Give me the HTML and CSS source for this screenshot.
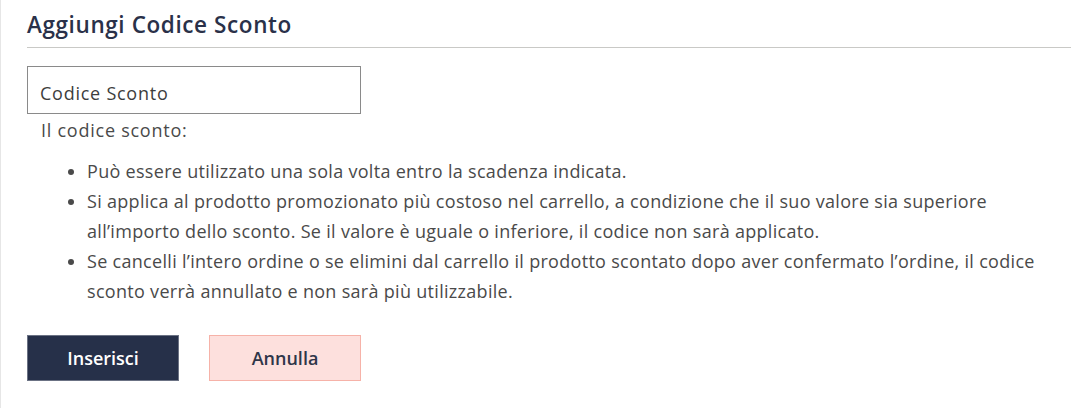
FILE: index.html
```html
<!DOCTYPE html>
<html lang="it">
<head>
<meta charset="utf-8">
<title>Aggiungi Codice Sconto</title>
<link rel="stylesheet" href="styles.css">
</head>
<body>
<div class="page">
  <h2 class="title">Aggiungi Codice Sconto</h2>
  <div class="field">
    <input class="input" type="text" placeholder="Codice Sconto">
  </div>
  <p class="intro">Il codice sconto:</p>
  <ul class="rules">
    <li>Può essere utilizzato una sola volta entro la scadenza indicata.</li>
    <li>Si applica al prodotto promozionato più costoso nel carrello, a condizione che il suo valore sia superiore all’importo dello sconto. Se il valore è uguale o inferiore, il codice non sarà applicato.</li>
    <li>Se cancelli l’intero ordine o se elimini dal carrello il prodotto scontato dopo aver confermato l’ordine, il codice sconto verrà annullato e non sarà più utilizzabile.</li>
  </ul>
  <div class="actions">
    <button class="btn btn-primary" type="button">Inserisci</button>
    <button class="btn btn-cancel" type="button">Annulla</button>
  </div>
</div>
</body>
</html>
```

FILE: styles.css
```css
html, body {
  margin: 0;
  padding: 0;
  background: #ffffff;
}
body {
  font-family: "Open Sans", "Noto Sans", sans-serif;
  color: #4a4a4a;
  border-left: 1px solid #e6e6e6;
  min-height: 408px;
  box-sizing: border-box;
}
.page {
  padding: 11px 0 0 26px;
}
.title {
  margin: 0;
  font-size: 22.5px;
  font-weight: 600;
  color: #2a3149;
  line-height: 28px;
  letter-spacing: 0.6px;
  padding-bottom: 8px;
  border-bottom: 1px solid #c9c9c6;
}
.field {
  margin-top: 18px;
}
.input {
  display: block;
  box-sizing: border-box;
  width: 334px;
  height: 48px;
  border: 1px solid #8a8a8a;
  border-radius: 0;
  padding: 5px 12px 0;
  font-family: inherit;
  font-size: 18px;
  letter-spacing: 0.75px;
  color: #333;
  outline: none;
}
.input::placeholder {
  color: #3d3d3d;
  opacity: 1;
}
.intro {
  margin: 3px 0 0 14px;
  font-size: 18px;
  letter-spacing: 0.75px;
  line-height: 26px;
}
.rules {
  margin: 13px 0 0 0;
  padding: 0 0 0 60px;
  font-size: 18px;
  letter-spacing: 0.3px;
  line-height: 30px;
  width: 960px;
}
.actions {
  display: flex;
  gap: 30px;
  margin-top: 29px;
}
.btn {
  box-sizing: border-box;
  width: 152px;
  height: 46px;
  font-family: inherit;
  font-size: 18px;
  font-weight: 600;
  border-radius: 0;
  cursor: pointer;
}
.btn-primary {
  background: #263049;
  color: #ffffff;
  border: 1px solid #6b7284;
}
.btn-cancel {
  background: #fde0dd;
  color: #2f3649;
  border: 1px solid #f6b2a8;
}
```
